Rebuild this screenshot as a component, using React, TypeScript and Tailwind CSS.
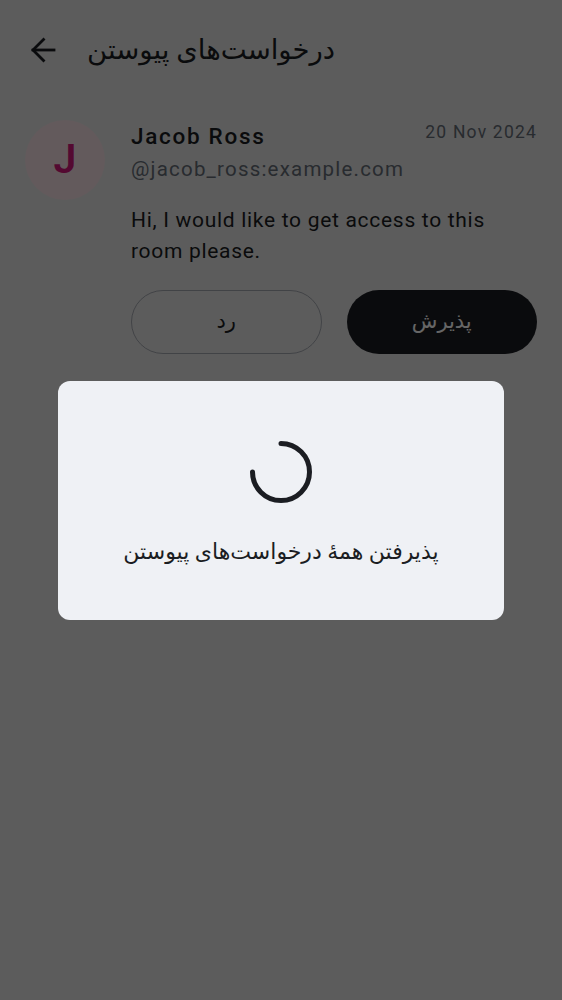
import React from "react";

const font = { fontFamily: "Roboto, 'DejaVu Sans', sans-serif" };

function BackArrow() {
  return (
    <svg width="26" height="26" viewBox="0 0 26 26" fill="none" stroke="#1b1d22" strokeWidth="2.8" strokeLinecap="square">
      <path d="M3 13H24" />
      <path d="M13.5 2.5L3 13L13.5 23.5" />
    </svg>
  );
}

function Spinner() {
  // 270deg arc, 12 o'clock clockwise round to 9 o'clock
  return (
    <svg width="64" height="64" viewBox="0 0 64 64" fill="none">
      <path
        d="M32 3.5A28.5 28.5 0 1 1 3.5 32"
        stroke="#1b1d22"
        strokeWidth="5"
        strokeLinecap="round"
      />
    </svg>
  );
}

function RequestItem() {
  return (
    <div className="flex gap-[26px] px-[25px] pt-[20px]">
      <div className="flex h-[80px] w-[80px] shrink-0 items-center justify-center rounded-full bg-[#f7e2e7]">
        <span className="text-[41px] font-semibold text-[#d2187a]">J</span>
      </div>
      <div className="flex min-w-0 flex-1 flex-col pt-[1px]">
        <div className="flex items-start justify-between">
          <span className="text-[22.5px] font-medium leading-[31px] tracking-[1.7px] text-[#1b1d22]">Jacob Ross</span>
          <span className="text-[17.5px] leading-[22px] tracking-[1.2px] text-[#656d77]">20 Nov 2024</span>
        </div>
        <span className="text-[20.5px] leading-[34px] tracking-[1.2px] text-[#656d77]">@jacob_ross:example.com</span>
        <p className="mt-[19px] text-[21px] leading-[31px] tracking-[0.7px] text-[#1b1d22]">
          Hi, I would like to get access to this room please.
        </p>
        <div className="mt-[23px] grid grid-cols-2 gap-[25px]">
          <button className="flex h-[64px] items-center justify-center rounded-full border border-[#a4a8b0] text-[21px] text-[#1b1d22]">
            <span dir="rtl">رد</span>
          </button>
          <button className="flex h-[64px] items-center justify-center rounded-full bg-[#1b1d22] text-[21px] text-white">
            <span dir="rtl">پذیرش</span>
          </button>
        </div>
      </div>
    </div>
  );
}

export default function App() {
  return (
    <div className="relative min-h-screen w-full bg-[#e6e6e6]" style={font}>
      <header className="flex h-[100px] items-center gap-[31px] pl-[30px]">
        <BackArrow />
        <h1 dir="rtl" className="text-[27.5px] text-[#1b1d22]">درخواست‌های پیوستن</h1>
      </header>

      <RequestItem />

      <div className="fixed inset-0 flex items-center justify-center bg-black/60">
        <div className="flex w-[446px] flex-col items-center gap-[33px] rounded-[12px] bg-[#eff1f5] pb-[53px] pt-[59px]">
          <Spinner />
          <p dir="rtl" className="text-[22px] leading-[30px] text-[#1b1d22]">پذیرفتن همهٔ درخواست‌های پیوستن</p>
        </div>
      </div>
    </div>
  );
}
